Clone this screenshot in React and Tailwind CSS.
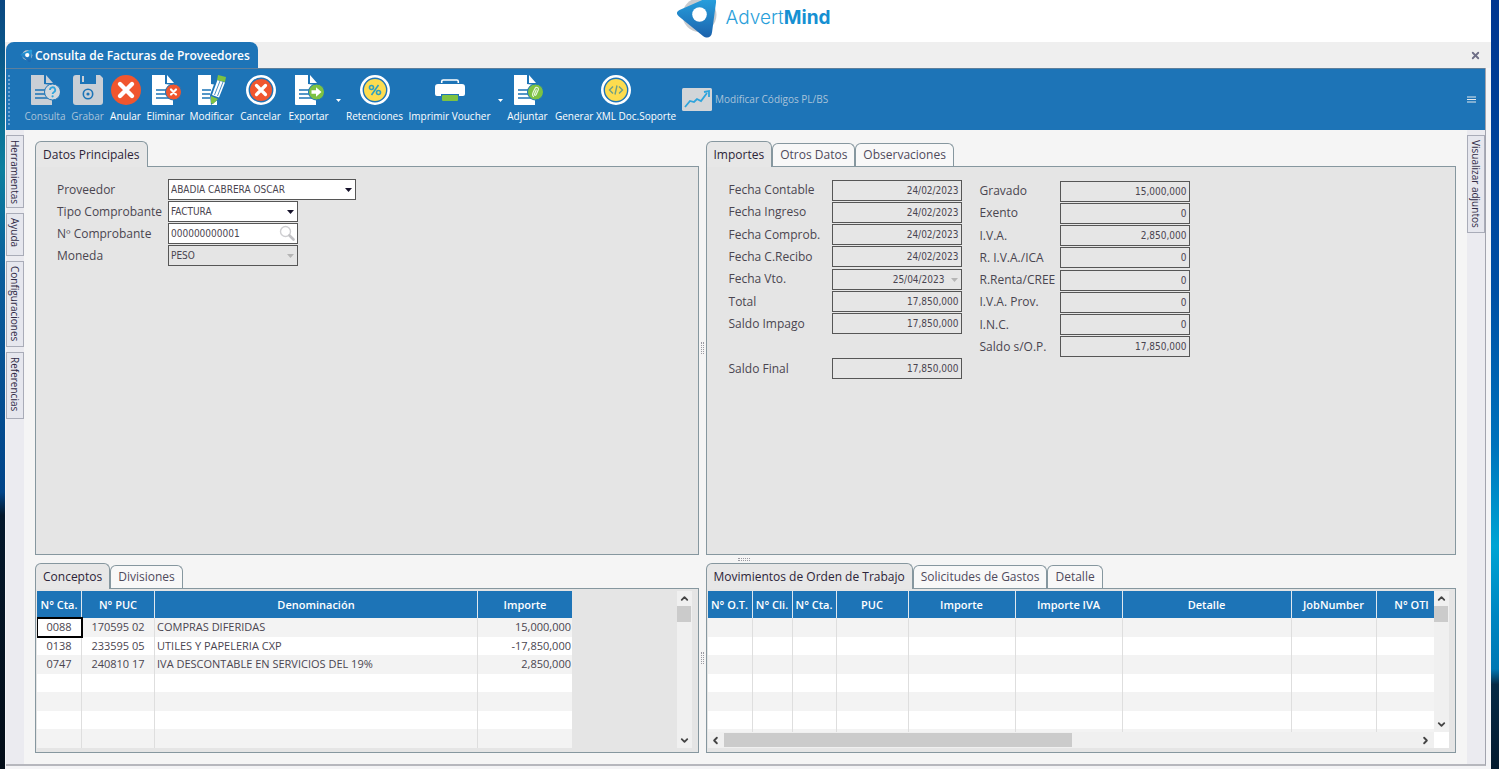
import React, { useState } from "react";
import { ChevronDown, ChevronLeft, ChevronRight, ChevronUp, X } from "lucide-react";

/* ---------- Toolbar icons ---------- */

function Sheet({ color = "#fff" }) {
  return (
    <>
      <path d="M1 0h13v9l8 1v20H2a1 1 0 0 1-1-1z" fill={color} />
      <path d="M16 0l7 8h-7z" fill={color} />
      <path d="M5 15h10M5 19h10M5 23h13" stroke="#1d74b7" strokeWidth="1.4" />
    </>
  );
}

function ConsultaIcon() {
  return (
    <svg className="size-[30px]" viewBox="0 0 30 30" fill="none">
      <Sheet color="#c9cfd6" />
      <circle cx="22.5" cy="17" r="8" fill="#d3d8dd" stroke="#1d74b7" />
      <path d="M20 15a2.6 2.6 0 1 1 3.8 2.2c-.9.5-1.2.9-1.2 1.9" stroke="#2fa4dc" strokeWidth="1.8" />
      <circle cx="22.6" cy="21.3" r="1.1" fill="#2fa4dc" />
    </svg>
  );
}

function GrabarIcon() {
  return (
    <svg className="size-[30px]" viewBox="0 0 30 30" fill="none">
      <path d="M3 0h4v9h16V0h4l3 3v24a3 3 0 0 1-3 3H3a3 3 0 0 1-3-3V3a3 3 0 0 1 3-3z" fill="#c9cfd6" />
      <path d="M9 1h2v6H9z" fill="#c9cfd6" />
      <circle cx="15" cy="19" r="4.7" stroke="#1d74b7" strokeWidth="1.6" />
      <circle cx="15" cy="19" r="1.6" fill="#1d74b7" />
    </svg>
  );
}

function AnularIcon() {
  return (
    <svg className="size-[30px]" viewBox="0 0 30 30" fill="none">
      <circle cx="15" cy="15" r="15" fill="#f0562f" />
      <path d="M9 9l12 12M21 9L9 21" stroke="#fff" strokeWidth="4.4" strokeLinecap="round" />
    </svg>
  );
}

function EliminarIcon() {
  return (
    <svg className="size-[30px]" viewBox="0 0 30 30" fill="none">
      <Sheet />
      <circle cx="22.5" cy="17" r="8" fill="#f0562f" stroke="#1d74b7" />
      <path d="M20 14.5l5 5M25 14.5l-5 5" stroke="#fff" strokeWidth="2.2" strokeLinecap="round" />
    </svg>
  );
}

function ModificarIcon() {
  return (
    <svg className="size-[30px]" viewBox="0 0 30 30" fill="none">
      <path d="M1 0h13v9l6 1v20H2a1 1 0 0 1-1-1z" fill="#fff" />
      <path d="M5 15h9M5 19h8M5 23h8" stroke="#1d74b7" strokeWidth="1.4" />
      <path d="M19 4l10 3-7 17-8 6-1-10z" fill="#1d74b7" />
      <path d="M20.5 5l7.5 2.5-6 15-7-2.5z" fill="#fff" />
      <path d="M21 0l8 2-1 5-8-2z" fill="#7dc242" />
      <path d="M23 6l-5.5 14M26 7l-5.5 14" stroke="#1d74b7" strokeWidth="0.8" />
      <path d="M14 21l7 3-5 5-2-1z" fill="#7dc242" />
    </svg>
  );
}

function CancelarIcon() {
  return (
    <svg className="size-[30px]" viewBox="0 0 30 30" fill="none">
      <circle cx="15" cy="15" r="13.7" stroke="#fff" strokeWidth="2.6" />
      <circle cx="15" cy="15" r="11" fill="#f0562f" />
      <path d="M10.5 10.5l9 9M19.5 10.5l-9 9" stroke="#fff" strokeWidth="3.2" strokeLinecap="round" />
    </svg>
  );
}

function ExportarIcon() {
  return (
    <svg className="size-[30px]" viewBox="0 0 30 30" fill="none">
      <Sheet />
      <circle cx="22.5" cy="17" r="8" fill="#7dc242" stroke="#1d74b7" />
      <path d="M17.5 15.3h4.5V12.3l5.5 4.7-5.5 4.7V18.7h-4.5z" fill="#fff" />
    </svg>
  );
}

function Coin({ children }) {
  return (
    <svg className="size-[30px]" viewBox="0 0 30 30" fill="none">
      <circle cx="15" cy="15" r="13.7" stroke="#fff" strokeWidth="2.6" />
      <circle cx="15" cy="15" r="11" fill="#fddc4f" />
      {children}
    </svg>
  );
}

function RetencionesIcon() {
  return (
    <Coin>
      <circle cx="11.5" cy="12.5" r="2" stroke="#2f9fc0" strokeWidth="1.6" />
      <circle cx="18.5" cy="17.5" r="2" stroke="#2f9fc0" strokeWidth="1.6" />
      <path d="M18.5 10l-7 10" stroke="#2f9fc0" strokeWidth="1.6" />
    </Coin>
  );
}

function XmlIcon() {
  return (
    <Coin>
      <path d="M12 11.5L8.5 15l3.5 3.5M18 11.5l3.5 3.5-3.5 3.5M16 10.5l-2 9" stroke="#6f9f86" strokeWidth="1.4" />
    </Coin>
  );
}

function ImprimirIcon() {
  return (
    <svg className="size-[30px]" viewBox="0 0 30 30" fill="none">
      <path d="M6.7 8V6.5a1.5 1.5 0 0 1 1.5-1.5h13.6a1.5 1.5 0 0 1 1.5 1.5V8" stroke="#fff" strokeWidth="1.6" />
      <path d="M3 9h24a3 3 0 0 1 3 3v7a2 2 0 0 1-2 2h-4v-2H6v2H2a2 2 0 0 1-2-2v-7a3 3 0 0 1 3-3z" fill="#fff" />
      <rect x="7" y="20" width="16" height="6" rx="1" fill="#7dc242" />
    </svg>
  );
}

function AdjuntarIcon() {
  return (
    <svg className="size-[30px]" viewBox="0 0 30 30" fill="none">
      <Sheet />
      <circle cx="22.5" cy="17" r="8" fill="#7dc242" stroke="#1d74b7" />
      <path
        d="M20.5 21.5c-1.5-1-1-3 0-5l1.5-3c1-2 4.2-1 3.2 1.5l-2 4.5c-.6 1.3-2.2.8-1.7-.6l1.7-4"
        stroke="#e9f5dc"
        strokeWidth="1.2"
        strokeLinecap="round"
      />
    </svg>
  );
}

function ChartIcon() {
  return (
    <svg className="h-[23px] w-[30px]" viewBox="0 0 30 23" fill="none">
      <rect width="30" height="23" rx="1.5" fill="#d2d5d8" />
      <path d="M3 19l5-6 4 1 3-3 4 2 6-8" stroke="#2fa4dc" strokeWidth="1.8" />
      <path d="M22 4l5-1v6" stroke="#2fa4dc" strokeWidth="1.8" />
    </svg>
  );
}

function BrandMark({ className }) {
  return (
    <svg className={className} viewBox="0 0 42 44" fill="none">
      <defs>
        <linearGradient id="brand" x1="0" y1="0" x2="0" y2="1">
          <stop offset="0" stopColor="#27a3e0" />
          <stop offset="1" stopColor="#1c62ac" />
        </linearGradient>
      </defs>
      <circle cx="23.5" cy="21" r="17" fill="#c9cbce" />
      <path
        d="M3.5 16L32 3.5c5-2 8.5 0 8 5L36 38.5c-.6 5-5 6.5-9 3.5L3 22.5c-3-2.5-2.6-5 .5-6.5z"
        fill="url(#brand)"
      />
      <circle cx="23.5" cy="20.5" r="7.3" fill="#fff" />
    </svg>
  );
}

const toolbar = [
  { label: "Consulta", icon: ConsultaIcon, width: "w-[46px]", disabled: true },
  { label: "Grabar", icon: GrabarIcon, width: "w-[39px]", disabled: true },
  { label: "Anular", icon: AnularIcon, width: "w-[37px]" },
  { label: "Eliminar", icon: EliminarIcon, width: "w-[43px]" },
  { label: "Modificar", icon: ModificarIcon, width: "w-[49px]" },
  { label: "Cancelar", icon: CancelarIcon, width: "w-[49px]" },
  { label: "Exportar", icon: ExportarIcon, width: "w-[47px]", menu: true },
  { label: "Retenciones", icon: RetencionesIcon, width: "w-[61px]" },
  { label: "Imprimir Voucher", icon: ImprimirIcon, width: "w-[89px]", menu: true },
  { label: "Adjuntar", icon: AdjuntarIcon, width: "w-[43px]" },
  { label: "Generar XML Doc.Soporte", icon: XmlIcon, width: "w-[133px]" },
];

function Toolbar() {
  return (
    <div className="flex h-[62px] items-start border-t border-[#5d7f9c] bg-[#1d74b7] pt-[6px] pr-2 text-white">
      <div className="mr-3 ml-[2px] h-[50px] w-[2px] border-l-2 border-dotted border-[#6aa5d4]" />
      {toolbar.map(({ label, icon: Icon, width, disabled, menu }) => (
        <React.Fragment key={label}>
          <button
            disabled={disabled}
            className={`flex shrink-0 flex-col items-center gap-1 text-[10px] leading-[14px] whitespace-nowrap ${width} ${
              disabled ? "text-[#a9c3d9]" : "text-white"
            }`}
          >
            <Icon />
            {label}
          </button>
          {menu && (
            <button aria-label={`Más opciones de ${label}`} className="flex h-[50px] w-[12px] shrink-0 items-center justify-center">
              <svg className="h-[3px] w-[5px]" viewBox="0 0 5 3">
                <path d="M0 0h5L2.5 3z" fill="#fff" />
              </svg>
            </button>
          )}
        </React.Fragment>
      ))}
      <button disabled className="flex h-[48px] shrink-0 items-center gap-[3px] text-[10px] text-[#a9c3d9]">
        <ChartIcon />
        Modificar Códigos PL/BS
      </button>
      <button aria-label="Opciones de barra" className="ml-auto flex h-[48px] w-[10px] items-center">
        <svg className="h-[7px] w-[9px]" viewBox="0 0 9 7">
          <path d="M0 1h9M0 3.5h9M0 6h9" stroke="#e4e9ee" strokeWidth="1.2" />
        </svg>
      </button>
    </div>
  );
}

/* ---------- Shared pieces ---------- */

function SideTab({ label, height }) {
  return (
    <button
      className={`flex w-[18px] items-start border border-[#a9acb8] bg-[#e6e7ee] pt-1 text-[10px] leading-[16px] text-[#2f2a45] [writing-mode:vertical-rl] ${height}`}
    >
      {label}
    </button>
  );
}

function Panel({ tabs, bodyClass, children }) {
  const [active, setActive] = useState(tabs[0]);
  return (
    <section className="flex min-w-0 flex-col">
      <div role="tablist" className="flex h-[25px] items-end">
        {tabs.map((tab) => (
          <button
            key={tab}
            role="tab"
            aria-selected={tab === active}
            onClick={() => setActive(tab)}
            className={`rounded-t-md border border-b-0 border-[#86979f] px-[7px] text-[12px] leading-[22px] whitespace-nowrap ${
              tab === active
                ? "relative z-10 -mb-px h-[26px] bg-[#e7e7e7] text-[#2c2438]"
                : "h-[23px] bg-[#f8f8f8] text-[#4f4a5c]"
            }`}
          >
            {tab}
          </button>
        ))}
      </div>
      <div className={`flex-1 border border-[#86979f] bg-[#e5e5e5] ${bodyClass}`}>{children}</div>
    </section>
  );
}

const inputClass = "h-[21px] border border-[#565656] font-['DejaVu_Sans_Condensed','Open_Sans',sans-serif] text-[10px] text-[#4a4550]";

function Arrow({ color }) {
  return (
    <svg className="pointer-events-none absolute top-[9px] right-1 h-[4px] w-[7px]" viewBox="0 0 7 4">
      <path d="M0 0h7L3.5 4z" fill={color} />
    </svg>
  );
}

function SelectField({ id, label, value, width, disabled }) {
  return (
    <>
      <label htmlFor={id}>{label}</label>
      <div className={`relative ${width}`}>
        <select
          id={id}
          disabled={disabled}
          className={`${inputClass} w-full appearance-none px-[2px] opacity-100 ${disabled ? "bg-[#e5e5e5]" : "bg-white"}`}
        >
          <option>{value}</option>
        </select>
        <Arrow color={disabled ? "#b5b5b5" : "#16122a"} />
      </div>
    </>
  );
}

function AmountField({ id, label, value, picker }) {
  return (
    <>
      <label htmlFor={id} className="whitespace-nowrap">{label}</label>
      <div className="relative">
        <input
          id={id}
          readOnly
          value={value}
          className={`${inputClass} w-[130px] bg-[#e6e6e6] text-right ${picker ? "pr-4" : "pr-[2px]"}`}
        />
        {picker && <Arrow color="#b5b5b5" />}
      </div>
    </>
  );
}

function DatosPrincipales() {
  return (
    <form className="grid grid-cols-[111px_1fr] items-center gap-y-px text-[12px] leading-[16px] text-[#4a4550]">
      <SelectField id="proveedor" label="Proveedor" value="ABADIA CABRERA OSCAR" width="w-[188px]" />
      <SelectField id="tipo" label="Tipo Comprobante" value="FACTURA" width="w-[130px]" />
      <label htmlFor="numero">Nº Comprobante</label>
      <div className="relative w-[130px]">
        <input id="numero" defaultValue="000000000001" className={`${inputClass} w-full bg-white px-[2px]`} />
        <svg className="absolute top-[2px] right-[3px] size-4" viewBox="0 0 16 16" fill="none">
          <circle cx="6.5" cy="6.5" r="5" stroke="#cfcfd2" strokeWidth="1.4" />
          <path d="M10.5 10.5l4 4" stroke="#c2c2c6" strokeWidth="2.6" strokeLinecap="round" />
        </svg>
      </div>
      <SelectField id="moneda" label="Moneda" value="PESO" width="w-[130px]" disabled />
    </form>
  );
}

const fechas = [
  ["Fecha Contable", "24/02/2023"],
  ["Fecha Ingreso", "24/02/2023"],
  ["Fecha Comprob.", "24/02/2023"],
  ["Fecha C.Recibo", "24/02/2023"],
  ["Fecha Vto.", "25/04/2023", true],
  ["Total", "17,850,000"],
  ["Saldo Impago", "17,850,000"],
];

const importes = [
  ["Gravado", "15,000,000"],
  ["Exento", "0"],
  ["I.V.A.", "2,850,000"],
  ["R. I.V.A./ICA", "0"],
  ["R.Renta/CREE", "0"],
  ["I.V.A. Prov.", "0"],
  ["I.N.C.", "0"],
  ["Saldo s/O.P.", "17,850,000"],
];

function Importes() {
  return (
    <form className="flex gap-[18px] text-[12px] leading-[16px] text-[#4a4550]">
      <div className="flex flex-col gap-[23px]">
        <div className="grid h-[156px] grid-cols-[103px_130px] items-center">
          {fechas.map(([label, value, picker]) => (
            <AmountField key={label} id={`f-${label}`} label={label} value={value} picker={picker} />
          ))}
        </div>
        <div className="grid grid-cols-[103px_130px] items-center">
          <AmountField id="saldo-final" label="Saldo Final" value="17,850,000" />
        </div>
      </div>
      <div className="mt-px grid h-[178px] grid-cols-[80px_130px] items-center">
        {importes.map(([label, value]) => (
          <AmountField key={label} id={`i-${label}`} label={label} value={value} />
        ))}
      </div>
    </form>
  );
}

function Scrollbar() {
  return (
    <div className="flex w-[15px] shrink-0 flex-col items-center bg-[#f0f0f0] text-[#444]">
      <button aria-label="Subir" className="flex h-[15px] items-center"><ChevronUp className="size-[11px]" strokeWidth={4} /></button>
      <div className="h-4 w-[14px] bg-[#cbcbcb]" />
      <button aria-label="Bajar" className="mt-auto flex h-[15px] items-center"><ChevronDown className="size-[11px]" strokeWidth={4} /></button>
    </div>
  );
}

function DataTable({ columns, rows, className }) {
  const lines = [...rows, ...Array(7 - rows.length).fill([])];
  return (
    <table className={`h-[157px] shrink-0 table-fixed border-separate border-spacing-0 text-[11px] leading-[14px] text-[#4a4550] ${className}`}>
      <thead>
        <tr className="h-[27px] bg-[#1d74b7] text-white">
          {columns.map((col) => (
            <th key={col.title} className={`border-r border-[#dfe8ef] p-0 font-semibold whitespace-nowrap last:border-r-0 ${col.width}`}>
              {col.title}
            </th>
          ))}
        </tr>
      </thead>
      <tbody>
        {lines.map((row, r) => (
          <tr key={r} className="h-[18px] odd:bg-[#f3f3f3] even:bg-white">
            {columns.map((col, c) => (
              <td
                key={col.title}
                className={`border-r border-[#dedede] p-0 whitespace-nowrap last:border-r-0 ${col.align || "text-center"} ${
                  r === 0 && c === 0 && row.length ? "bg-white outline-2 -outline-offset-1 outline-black" : ""
                }`}
              >
                {row[c]}
              </td>
            ))}
          </tr>
        ))}
      </tbody>
    </table>
  );
}

const conceptosCols = [
  { title: "N° Cta.", width: "w-[45px]" },
  { title: "N° PUC", width: "w-[73px]" },
  { title: "Denominación", width: "w-[323px]", align: "text-left pl-[2px]" },
  { title: "Importe", width: "w-[94px]", align: "text-right pr-px" },
];

const conceptos = [
  ["0088", "170595 02", "COMPRAS DIFERIDAS", "15,000,000"],
  ["0138", "233595 05", "UTILES Y PAPELERIA CXP", "-17,850,000"],
  ["0747", "240810 17", "IVA DESCONTABLE EN SERVICIOS DEL 19%", "2,850,000"],
];

const movimientosCols = [
  { title: "N° O.T.", width: "w-[45px]" },
  { title: "N° Cli.", width: "w-[40px]" },
  { title: "N° Cta.", width: "w-[44px]" },
  { title: "PUC", width: "w-[72px]" },
  { title: "Importe", width: "w-[107px]" },
  { title: "Importe IVA", width: "w-[107px]" },
  { title: "Detalle", width: "w-[169px]" },
  { title: "JobNumber", width: "w-[85px]" },
  { title: "N° OTI", width: "w-[70px]" },
];

function Grip({ vertical }) {
  return vertical ? (
    <div className="flex items-center justify-center">
      <div className="h-3 w-[3px] border-x border-dotted border-[#9a9aa2]" />
    </div>
  ) : (
    <div className="col-start-3 flex items-center pl-8">
      <div className="h-[3px] w-3 border-y border-dotted border-[#9a9aa2]" />
    </div>
  );
}

function App() {
  return (
    <div className="flex min-h-screen font-['Open_Sans',sans-serif]">
      {/* Desktop, left edge */}
      <div className="w-[5px] shrink-0 bg-[linear-gradient(#0a4680,#0b7f9f_22%,#0a5c9c_36%,#004489_64%,#04182c_67%,#030d18)]" />

      <div className="flex min-w-0 flex-1 flex-col bg-[#f4f4f6]">
        <header className="flex h-[42px] items-start justify-center overflow-hidden bg-white pl-[10px]">
          <div className="flex h-9 items-center gap-2">
            <BrandMark className="-mt-1 h-[44px] w-[42px]" />
            <span className="font-[Inter,'Open_Sans',sans-serif] text-[19px] font-light text-[#2a9fda]">
              Advert<b className="font-bold text-[#1690d2]">Mind</b>
            </span>
          </div>
        </header>

        {/* Document tab */}
        <div className="flex h-[26px] items-center justify-between bg-[#efefef] pl-px">
          <div className="flex h-full items-center gap-[2px] rounded-t-lg bg-[#1d74b7] pt-px pr-2 pl-[14px] text-[12px] font-semibold text-white">
            <BrandMark className="size-[13px]" />
            Consulta de Facturas de Proveedores
          </div>
          <button aria-label="Cerrar" className="mr-[10px] text-[#6f6f86]">
            <X className="size-[11px]" strokeWidth={4} />
          </button>
        </div>

        <div className="mr-[5px] mb-[3px] ml-px flex flex-1 flex-col border-r border-b-2 border-r-[#a2a4ae] border-b-[#b6b7bd] bg-[#f5f5f5]">
          <Toolbar />

          <div className="flex flex-1">
            <aside className="flex w-[18px] flex-col gap-[5px] bg-[#ebebf0] pt-[5px]">
              <SideTab label="Herramientas" height="h-[73px]" />
              <SideTab label="Ayuda" height="h-[43px]" />
              <SideTab label="Configuraciones" height="h-[86px]" />
              <SideTab label="Referencias" height="h-[67px]" />
            </aside>

            <main className="grid min-w-0 flex-1 grid-cols-[minmax(0,664fr)_7px_minmax(0,751fr)] grid-rows-[1fr_8px_auto] px-[11px] pt-[11px] pb-[11px]">
              <Panel tabs={["Datos Principales"]} bodyClass="pt-3 pl-[21px]">
                <DatosPrincipales />
              </Panel>
              <Grip vertical />
              <Panel tabs={["Importes", "Otros Datos", "Observaciones"]} bodyClass="pt-3 pl-[22px]">
                <Importes />
              </Panel>

              <Grip />

              <Panel tabs={["Conceptos", "Divisiones"]} bodyClass="flex pt-[2px] pr-[6px] pb-1 pl-px">
                <div className="flex min-w-0 flex-1 overflow-hidden">
                  <DataTable columns={conceptosCols} rows={conceptos} className="w-[535px]" />
                </div>
                <Scrollbar />
              </Panel>
              <Grip vertical />
              <Panel
                tabs={["Movimientos de Orden de Trabajo", "Solicitudes de Gastos", "Detalle"]}
                bodyClass="pt-[2px] pr-[6px] pb-1 pl-px"
              >
                <div className="flex h-[141px]">
                  <div className="min-w-0 flex-1 overflow-hidden">
                    <DataTable columns={movimientosCols} rows={[]} className="w-[739px]" />
                  </div>
                  <Scrollbar />
                </div>
                <div className="flex h-4 bg-white pr-[15px]">
                  <div className="flex flex-1 items-center bg-[#f0f0f0] text-[#444]">
                    <button aria-label="Izquierda" className="flex w-4 justify-center"><ChevronLeft className="size-[11px]" strokeWidth={4} /></button>
                    <div className="h-[14px] w-[348px] bg-[#cbcbcb]" />
                    <button aria-label="Derecha" className="ml-auto flex w-4 justify-center"><ChevronRight className="size-[11px]" strokeWidth={4} /></button>
                  </div>
                </div>
              </Panel>
            </main>

            <aside className="flex w-[18px] flex-col items-end bg-[#ebebf0] pt-[5px]">
              <SideTab label="Visualizar adjuntos" height="h-[98px]" />
            </aside>
          </div>
        </div>
      </div>

      {/* Desktop, right edge */}
      <div className="w-2 shrink-0 bg-[linear-gradient(#003690,#0050a5_38%,#0072bc_58%,#00a4d4_71%,#0086c2_80%,#0078b4_87%,#062a45_89%,#031a2e)]" />
    </div>
  );
}

export default App;
